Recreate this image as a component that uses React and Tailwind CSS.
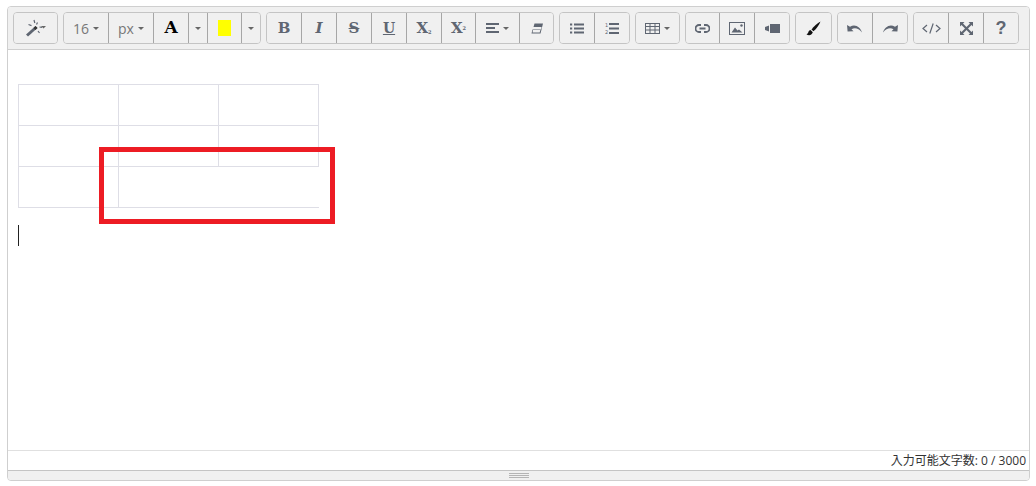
const G = "#5f6672";

function Caret({ color = "#666" }) {
  return <span className="inline-block w-0 h-0 border-x-[3px] border-x-transparent border-t-[3px]" style={{ borderTopColor: color }} />;
}

function Btn({ w, last, children }) {
  return (
    <button className={`${w} h-full flex items-center justify-center gap-[4px] bg-[#f0f0f0] text-[#666] ${last ? "" : "border-r border-[#a6a6a6]"}`}>
      {children}
    </button>
  );
}

function Group({ children }) {
  return <div className="flex h-[32px] rounded-[4px] border border-[#c4c4c4] overflow-hidden bg-[#f0f0f0] shrink-0">{children}</div>;
}

const serif = "font-['DejaVu_Serif',serif] font-bold";

function Wand() {
  return (
    <svg width="22" height="18" viewBox="0 0 22 18">
      <path d="M1 15.5 L10.5 7 L12.5 9 L3 17.5 Z" fill={G} />
      <path d="M8.5 9 L10.5 7 L12.5 9 L10.5 11 Z" fill="#333" />
      <path d="M9 1 L9.8 4 M3.5 5.5 L6.5 6.6 M12.5 3.5 L11.5 5.5 M14.5 8 L17 8.3 M13 12 L14.5 14" stroke={G} strokeWidth="1.2" />
      <path d="M17 7 L22 7 L19.5 9.6 Z" fill="#666" transform="translate(-1 0)" />
    </svg>
  );
}

function Icon({ w = 16, h = 16, children }) {
  return <svg width={w} height={h} viewBox={`0 0 ${w} ${h}`} fill={G}>{children}</svg>;
}

export default function App() {
  return (
    <div className="w-[1036px] h-[486px] bg-white pl-[7px] pt-[6px] font-['Open_Sans',sans-serif] relative overflow-hidden">
      <div className="w-[1023px] h-[475px] border border-[#cfcfcf] rounded-[4px] flex flex-col overflow-hidden">
        <div className="h-[43px] shrink-0 bg-[#f0f0f0] border-b border-[#cfcfcf] flex items-start gap-[5px] pl-[5px] pt-[5px]">
          <Group><Btn w="w-[43px]" last><Wand /></Btn></Group>

          <Group>
            <Btn w="w-[45px]"><span className="text-[14px] text-[#777]">16</span><Caret /></Btn>
            <Btn w="w-[45px]"><span className="text-[14px] text-[#777]">px</span><Caret /></Btn>
            <Btn w="w-[35px]"><span className={`${serif} text-[17px] text-black`}>A</span></Btn>
            <Btn w="w-[19px]"><Caret /></Btn>
            <Btn w="w-[34px]"><span className="block w-[13px] h-[16px] bg-[#ffff00]" /></Btn>
            <Btn w="w-[18px]" last><Caret /></Btn>
          </Group>

          <Group>
            <Btn w="w-[35px]"><span className={`${serif} text-[15px] text-[#5f6672]`}>B</span></Btn>
            <Btn w="w-[35px]"><span className={`${serif} italic text-[15px] text-[#5f6672]`}>I</span></Btn>
            <Btn w="w-[35px]"><span className={`${serif} text-[15px] text-[#5f6672] line-through`}>S</span></Btn>
            <Btn w="w-[35px]"><span className={`${serif} text-[14px] text-[#5f6672] underline`}>U</span></Btn>
            <Btn w="w-[35px]"><span className={`${serif} text-[15px] text-[#5f6672]`}>X<sub className="text-[5px]">2</sub></span></Btn>
            <Btn w="w-[34px]"><span className={`${serif} text-[15px] text-[#5f6672]`}>X<sup className="text-[5px]">2</sup></span></Btn>
            <Btn w="w-[44px]">
              <Icon w={13} h={11}><rect y="0" width="13" height="2" /><rect y="4" width="9" height="2" /><rect y="8" width="13" height="2" /></Icon>
              <Caret />
            </Btn>
            <Btn w="w-[33px]" last>
              <Icon w={12} h={11}><path d="M3.5 0.5 H12 L9.5 10.5 H0.5 L1.5 6.5 H10 L10.6 4 H2.5 Z" /><path d="M2 7 H9.4 L8.7 9.6 H1.6 Z" fill="#f0f0f0" /></Icon>
            </Btn>
          </Group>

          <Group>
            <Btn w="w-[35px]">
              <Icon w={14} h={11}><rect y="0.5" width="2.2" height="2" /><rect y="4.5" width="2.2" height="2" /><rect y="8.5" width="2.2" height="2" /><rect x="4" y="0.5" width="10" height="2" /><rect x="4" y="4.5" width="10" height="2" /><rect x="4" y="8.5" width="10" height="2" /></Icon>
            </Btn>
            <Btn w="w-[34px]" last>
              <svg width="14" height="13" viewBox="0 0 14 13" fill={G}>
                <text x="0" y="5" fontSize="5" fontFamily="DejaVu Sans">1</text>
                <text x="0" y="12" fontSize="5" fontFamily="DejaVu Sans">2</text>
                <rect x="4" y="1" width="10" height="2" /><rect x="4" y="5.5" width="10" height="2" /><rect x="4" y="10" width="10" height="2" />
              </svg>
            </Btn>
          </Group>

          <Group>
            <Btn w="w-[43px]" last>
              <Icon w={15} h={11}>
                <path fillRule="evenodd" d="M0 0H15V11H0Z M1 1V3H4.5V1Z M5.5 1V3H9.5V1Z M10.5 1V3H14V1Z M1 4V6.5H4.5V4Z M5.5 4V6.5H9.5V4Z M10.5 4V6.5H14V4Z M1 7.5V10H4.5V7.5Z M5.5 7.5V10H9.5V7.5Z M10.5 7.5V10H14V7.5Z" />
              </Icon>
              <Caret />
            </Btn>
          </Group>

          <Group>
            <Btn w="w-[34px]">
              <svg width="15" height="9" viewBox="0 0 15 9" fill="none" stroke={G} strokeWidth="1.8">
                <path d="M6 1H4a3.5 3.5 0 0 0 0 7h2M9 1h2a3.5 3.5 0 0 1 0 7H9M4.5 4.5h6" />
              </svg>
            </Btn>
            <Btn w="w-[35px]">
              <svg width="16" height="13" viewBox="0 0 16 13" fill={G}>
                <path fillRule="evenodd" d="M0 0H16V13H0Z M1 1V12H15V1Z" />
                <path d="M2.5 10.5 L6 5.5 L8.5 8.5 L10 7.5 L13.5 10.5Z" />
                <circle cx="12.5" cy="3.5" r="1.2" />
              </svg>
            </Btn>
            <Btn w="w-[34px]" last>
              <svg width="15" height="9" viewBox="0 0 15 9" fill={G}>
                <rect x="5" y="0" width="10" height="9" />
                <path d="M0 3 L4 1.5 V7.5 L0 6 Z" />
              </svg>
            </Btn>
          </Group>

          <Group>
            <Btn w="w-[35px]" last>
              <svg width="15" height="15" viewBox="0 0 15 15" fill="#111">
                <path d="M14.5 0.5 C11.5 2 7.5 5.5 5.5 8.5 L7.5 10.3 C10.5 8 13 4 14.5 0.5Z" />
                <path d="M4.5 9 C2.5 9.3 2.6 11 2 12 C1.6 12.8 1 13 0.5 13.3 C2.5 14.8 5.8 14.4 6.8 11.2Z" />
              </svg>
            </Btn>
          </Group>

          <Group>
            <Btn w="w-[35px]">
              <svg width="16" height="9" viewBox="0 0 16 9" fill={G}>
                <path d="M0 1 L0.6 7.5 L6.5 7.2 L4.5 5.3 C7.5 3.6 11.5 4 15 8.5 C13.5 3 8 -0.5 3 2.8Z" />
              </svg>
            </Btn>
            <Btn w="w-[34px]" last>
              <svg width="16" height="9" viewBox="0 0 16 9" fill={G} style={{ transform: "scaleX(-1)" }}>
                <path d="M0 1 L0.6 7.5 L6.5 7.2 L4.5 5.3 C7.5 3.6 11.5 4 15 8.5 C13.5 3 8 -0.5 3 2.8Z" />
              </svg>
            </Btn>
          </Group>

          <Group>
            <Btn w="w-[35px]">
              <svg width="19" height="11" viewBox="0 0 19 11" fill="none" stroke={G} strokeWidth="1.2">
                <path d="M5 2 L1 5.5 L5 9 M14 2 L18 5.5 L14 9 M11.2 0.5 L7.8 10.5" />
              </svg>
            </Btn>
            <Btn w="w-[35px]">
              <svg width="13" height="13" viewBox="0 0 13 13" fill={G}>
                <path d="M0 0H4.5L3 1.5L6.5 5L10 1.5L8.5 0H13V4.5L11.5 3L8 6.5L11.5 10L13 8.5V13H8.5L10 11.5L6.5 8L3 11.5L4.5 13H0V8.5L1.5 10L5 6.5L1.5 3L0 4.5Z" />
              </svg>
            </Btn>
            <Btn w="w-[34px]" last><span className="text-[18px] font-bold text-[#5f6672] font-['Liberation_Sans',sans-serif]">?</span></Btn>
          </Group>
        </div>

        <div className="flex-1 min-h-0 bg-white pt-[34px] pl-[10px]">
          <table className="border-collapse table-fixed w-[301px]">
            <tbody>
              <tr className="h-[41px]"><td className="border border-[#dedee6]" /><td className="border border-[#dedee6]" /><td className="border border-[#dedee6]" /></tr>
              <tr className="h-[41px]"><td className="border border-[#dedee6]" /><td className="border border-[#dedee6]" /><td className="border border-[#dedee6]" /></tr>
              <tr className="h-[41px]"><td className="border border-[#dedee6]" /><td colSpan={2} className="border-l border-b border-[#dedee6]" /></tr>
            </tbody>
          </table>
          <div className="w-px h-[21px] bg-[#222] mt-[17px]" />
        </div>

        <div className="h-[20px] shrink-0 border-t border-[#e0e0e0] bg-white flex items-center justify-end pr-[3px] text-[12px] text-[#333] font-['Open_Sans','Noto_Sans_CJK_JP',sans-serif]">
          入力可能文字数: 0 / 3000
        </div>

        <div className="h-[10px] shrink-0 border-t border-[#c4c4c4] bg-[#f0f0f0] flex flex-col items-center justify-center gap-px">
          <span className="block w-[20px] h-px bg-[#b4b4b4]" />
          <span className="block w-[20px] h-px bg-[#b4b4b4]" />
          <span className="block w-[20px] h-px bg-[#b4b4b4]" />
        </div>
      </div>

      <div className="absolute left-[99px] top-[147px] w-[236px] h-[77px] border-[5px] border-[#ed1c24]" />
    </div>
  );
}
